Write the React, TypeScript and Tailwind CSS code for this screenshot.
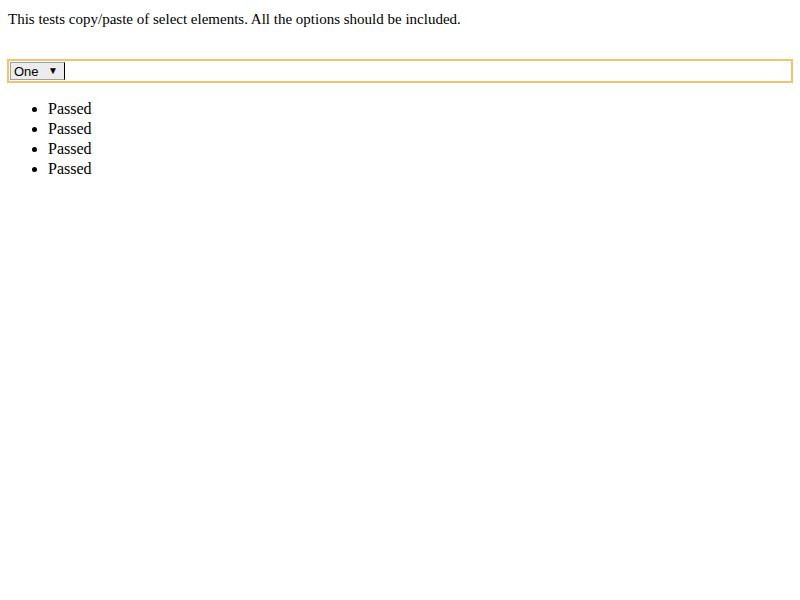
export default function App() {
  return (
    <div className="min-h-[600px] bg-white p-2 text-[16px] leading-[20px] text-black" style={{ fontFamily: '"Liberation Serif", serif' }}>
      <p className="pt-px text-[15px]">This tests copy/paste of select elements. All the options should be included.</p>
      <div className="-mx-px mt-[30px] flex h-[24px] items-center border-2 border-[#f0c66c] px-px">
        <div className="flex h-[18px] w-[55px] items-center justify-between border border-[#a0a0a0] border-r-black bg-[#ececec] pl-[3px] pr-[6px] text-[13px] leading-none" style={{ fontFamily: '"Liberation Sans", sans-serif' }}>
          <span>One</span>
          <span className="text-[10px]">▼</span>
        </div>
      </div>
      <ul className="mt-[16px] list-disc pl-10">
        <li>Passed</li>
        <li>Passed</li>
        <li>Passed</li>
        <li>Passed</li>
      </ul>
    </div>
  );
}
